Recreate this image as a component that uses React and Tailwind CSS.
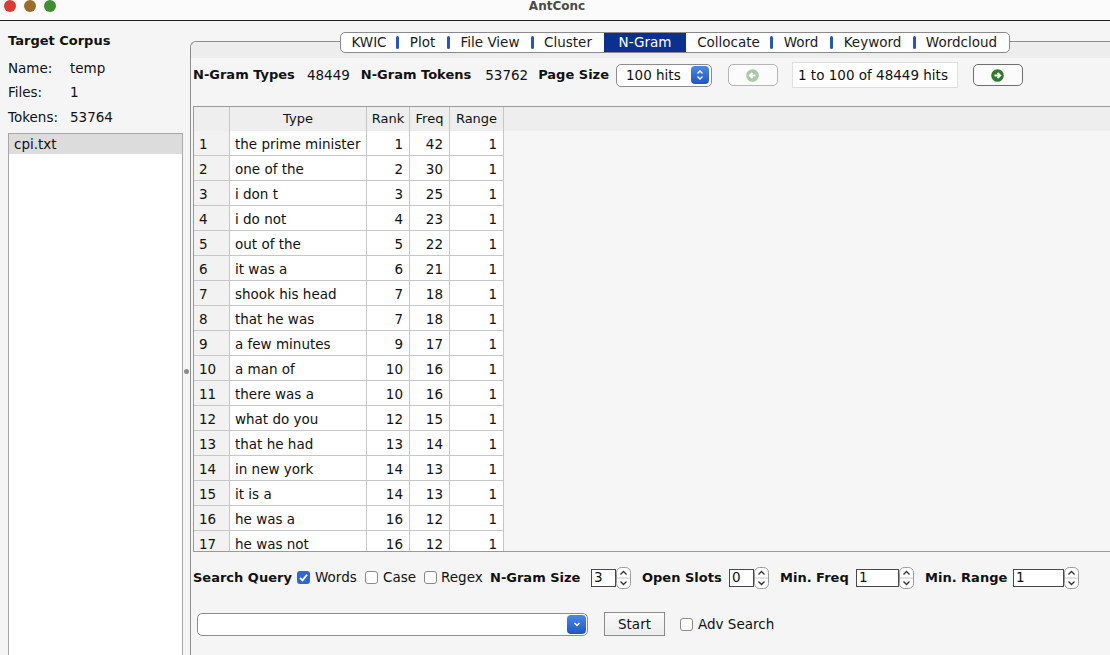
import React from "react";

const rows = [
  ["the prime minister", 1, 42, 1],
  ["one of the", 2, 30, 1],
  ["i don t", 3, 25, 1],
  ["i do not", 4, 23, 1],
  ["out of the", 5, 22, 1],
  ["it was a", 6, 21, 1],
  ["shook his head", 7, 18, 1],
  ["that he was", 7, 18, 1],
  ["a few minutes", 9, 17, 1],
  ["a man of", 10, 16, 1],
  ["there was a", 10, 16, 1],
  ["what do you", 12, 15, 1],
  ["that he had", 13, 14, 1],
  ["in new york", 14, 13, 1],
  ["it is a", 14, 13, 1],
  ["he was a", 16, 12, 1],
  ["he was not", 16, 12, 1],
];

const tabs = [
  ["KWIC", "w-[56px]"],
  ["Plot", "w-[51px]"],
  ["File View", "w-[84px]"],
  ["Cluster", "w-[72px]"],
  ["N-Gram", "w-[82px]"],
  ["Collocate", "w-[85px]"],
  ["Word", "w-[60px]"],
  ["Keyword", "w-[83px]"],
  ["Wordcloud", "w-[95px]"],
];

function Spinner() {
  return (
    <svg width="15" height="22" viewBox="0 0 15 22" className="shrink-0">
      <rect x="0.5" y="0.5" width="14" height="21" rx="5" fill="#fff" stroke="#9a9a9a" />
      <line x1="1" y1="11" x2="14" y2="11" stroke="#c8c8c8" />
      <path d="M4.5 7.5 L7.5 4.5 L10.5 7.5" fill="none" stroke="#333" strokeWidth="1.3" />
      <path d="M4.5 14.5 L7.5 17.5 L10.5 14.5" fill="none" stroke="#333" strokeWidth="1.3" />
    </svg>
  );
}

function Checkbox({ checked }) {
  if (checked) {
    return (
      <div className="w-[13px] h-[13px] rounded-[3px] bg-[#2c67d3] flex items-center justify-center shrink-0">
        <svg width="11" height="11" viewBox="0 0 11 11">
          <path d="M2 5.8 L4.5 8.3 L9 2.8" fill="none" stroke="#fff" strokeWidth="1.8" />
        </svg>
      </div>
    );
  }
  return <div className="w-[13px] h-[13px] rounded-[3px] border border-[#8a8a8a] bg-white shrink-0" />;
}

function NavIcon({ dir, color }) {
  return (
    <svg width="13" height="13" viewBox="0 0 13 13">
      <circle cx="6.5" cy="6.5" r="6.3" fill={color} />
      {dir === "left" ? (
        <path d="M9.5 6.5 H4 M6.5 3.8 L3.7 6.5 L6.5 9.2" fill="none" stroke="#fff" strokeWidth="1.8" />
      ) : (
        <path d="M3.5 6.5 H9 M6.5 3.8 L9.3 6.5 L6.5 9.2" fill="none" stroke="#fff" strokeWidth="1.8" />
      )}
    </svg>
  );
}

export default function App() {
  return (
    <div className="w-[1110px] h-[655px] overflow-hidden bg-[#f5f5f5] flex flex-col font-['DejaVu_Sans',sans-serif] text-[13.5px] text-[#111]">
      {/* title bar */}
      <div className="h-[21px] shrink-0 bg-[#fbfbfb] border-b border-[#1e1e1e] flex items-center">
        <div className="flex gap-[8px] pl-[4px] -mt-[8px]">
          <div className="w-[12px] h-[12px] rounded-full bg-[#dc3c31]" />
          <div className="w-[12px] h-[12px] rounded-full bg-[#9b6d2c]" />
          <div className="w-[12px] h-[12px] rounded-full bg-[#3f8e2f]" />
        </div>
        <div className="flex-1 text-center text-[12px] font-bold text-[#4a4a4a] -mt-[8px] pr-[52px]">AntConc</div>
      </div>

      <div className="flex flex-1 min-h-0">
        {/* left panel */}
        <div className="w-[183px] shrink-0 pl-[8px] pt-[8px] flex flex-col">
          <div className="h-[24px] flex items-center text-[13px] font-bold">Target Corpus</div>
          <div className="h-[24px] mt-[3px] flex items-center">
            <span className="w-[62px]">Name:</span>
            <span>temp</span>
          </div>
          <div className="h-[24px] flex items-center">
            <span className="w-[62px]">Files:</span>
            <span>1</span>
          </div>
          <div className="h-[26px] flex items-center pt-[1px]">
            <span className="w-[62px]">Tokens:</span>
            <span>53764</span>
          </div>
          <div className="mt-[3px] flex-1 bg-white border border-[#a8a8a8] border-b-0">
            <div className="h-[20px] bg-[#dcdcdc] flex items-center pl-[5px] pt-[1px]">cpi.txt</div>
          </div>
        </div>

        {/* divider */}
        <div className="w-[7px] shrink-0 flex justify-center pt-[348px]">
          <div className="w-[5px] h-[5px] rounded-full bg-[#8c8c8c]" />
        </div>

        {/* right panel */}
        <div className="flex-1 min-w-0 pt-[20px] flex flex-col">
          <div className="flex-1 min-h-0 flex flex-col border-t border-l border-[#8e8e8e] rounded-tl-[6px]">
            <div className="h-[16px] shrink-0 bg-[#ededed] rounded-tl-[6px] pl-[149px] flex items-start">
              <div className="-mt-[10px] h-[21px] flex border border-[#8a8a8a] rounded-[5px] bg-white overflow-hidden">
                {tabs.map(([label, w], i) => {
                  const selected = label === "N-Gram";
                  const prevSelected = i > 0 && tabs[i - 1][0] === "N-Gram";
                  return (
                    <div key={label} className={`${w} h-full relative flex items-center justify-center text-[13.5px] leading-none ${selected ? "bg-[#0c2f92] text-white" : "text-[#1a1a1a]"}`}>
                      {i > 0 && !selected && !prevSelected && (
                        <div className="absolute left-[-1px] top-[3px] w-[3px] h-[13px] rounded-full bg-[#2457c5]" />
                      )}
                      {label}
                    </div>
                  );
                })}
              </div>
            </div>

            <div className="h-[48px] shrink-0 flex items-center pb-[14px] pl-[2px]">
              <span className="text-[13px] font-bold">N-Gram Types</span>
              <span className="ml-[12px]">48449</span>
              <span className="ml-[11px] text-[13px] font-bold">N-Gram Tokens</span>
              <span className="ml-[14px]">53762</span>
              <span className="ml-[10px] text-[13px] font-bold">Page Size</span>
              <div className="ml-[7px] w-[96px] h-[23px] rounded-[5px] border border-[#8c8c8c] bg-white flex items-center pl-[9px] pr-[2px]">
                <span className="flex-1">100 hits</span>
                <div className="w-[18px] h-[18px] rounded-[4px] bg-gradient-to-b from-[#4b88e6] to-[#1e56c4] flex items-center justify-center">
                  <svg width="10" height="14" viewBox="0 0 10 14">
                    <path d="M2.5 5.5 L5 3 L7.5 5.5 M2.5 8.5 L5 11 L7.5 8.5" fill="none" stroke="#fff" strokeWidth="1.4" />
                  </svg>
                </div>
              </div>
              <div className="ml-[16px] w-[50px] h-[22px] rounded-[5px] border border-[#b5b5b5] bg-[#fbfbfb] flex items-center justify-center">
                <NavIcon dir="left" color="#a8c9a6" />
              </div>
              <div className="ml-[14px] w-[166px] h-[26px] bg-white border border-[#e0e0e0] flex items-center pl-[5px]">1 to 100 of 48449 hits</div>
              <div className="ml-[15px] w-[50px] h-[22px] rounded-[5px] border border-[#6e6e6e] bg-[#fbfbfb] flex items-center justify-center">
                <NavIcon dir="right" color="#2d7a2d" />
              </div>
            </div>

            {/* table */}
            <div className="ml-[2px] h-[446px] shrink-0 border-t border-l border-b border-[#9a9a9a] bg-[#f6f6f6] overflow-hidden">
              <div className="h-[24px] flex bg-[#eeeeee] text-[13px]">
                <div className="w-[36px] border-r border-[#c6c6c6]" />
                <div className="w-[137px] border-r border-[#c6c6c6] flex items-center justify-center">Type</div>
                <div className="w-[43px] border-r border-[#c6c6c6] flex items-center justify-center">Rank</div>
                <div className="w-[40px] border-r border-[#c6c6c6] flex items-center justify-center">Freq</div>
                <div className="w-[54px] border-r border-[#c6c6c6] flex items-center justify-center">Range</div>
              </div>
              {rows.map(([type, rank, freq, range], i) => (
                <div key={i} className="h-[25px] flex">
                  <div className="w-[36px] bg-[#f2f2f2] border-r border-b border-[#c6c6c6] flex items-center pl-[5px] pt-[3px]">{i + 1}</div>
                  <div className="w-[137px] bg-white border-r border-b border-[#c6c6c6] flex items-center pl-[5px] pt-[3px] whitespace-nowrap">{type}</div>
                  <div className="w-[43px] bg-white border-r border-b border-[#c6c6c6] flex items-center justify-end pr-[6px] pt-[3px]">{rank}</div>
                  <div className="w-[40px] bg-white border-r border-b border-[#c6c6c6] flex items-center justify-end pr-[6px] pt-[3px]">{freq}</div>
                  <div className="w-[54px] bg-white border-r border-b border-[#c6c6c6] flex items-center justify-end pr-[6px] pt-[3px]">{range}</div>
                </div>
              ))}
            </div>

            {/* search controls */}
            <div className="h-[50px] shrink-0 flex items-center pl-[2px] pt-[1px]">
              <span className="w-[104px] text-[13px] font-bold">Search Query</span>
              <Checkbox checked />
              <span className="ml-[5px] w-[50px]">Words</span>
              <Checkbox />
              <span className="ml-[5px] w-[41px]">Case</span>
              <Checkbox />
              <span className="ml-[4px] w-[49px]">Regex</span>
              <span className="w-[101px] text-[13px] font-bold">N-Gram Size</span>
              <div className="w-[25px] h-[18px] border border-[#4a4a4a] bg-white flex items-center pl-[2px]">3</div>
              <Spinner />
              <span className="ml-[11px] w-[87px] text-[13px] font-bold">Open Slots</span>
              <div className="w-[25px] h-[18px] border border-[#4a4a4a] bg-white flex items-center pl-[2px]">0</div>
              <Spinner />
              <span className="ml-[11px] w-[76px] text-[13px] font-bold">Min. Freq</span>
              <div className="w-[43px] h-[18px] border border-[#4a4a4a] bg-white flex items-center pl-[2px]">1</div>
              <Spinner />
              <span className="ml-[11px] w-[88px] text-[13px] font-bold">Min. Range</span>
              <div className="w-[51px] h-[18px] border border-[#4a4a4a] bg-white flex items-center pl-[2px]">1</div>
              <Spinner />
            </div>
            <div className="h-[44px] shrink-0 flex items-center pl-[6px]">
              <div className="w-[391px] h-[23px] rounded-[5px] border border-[#8e8e8e] bg-white flex items-center justify-end pr-[1px]">
                <div className="w-[19px] h-[19px] rounded-[4px] bg-gradient-to-b from-[#4b88e6] to-[#1e56c4] flex items-center justify-center">
                  <svg width="10" height="10" viewBox="0 0 10 10">
                    <path d="M2.5 4 L5 6.5 L7.5 4" fill="none" stroke="#fff" strokeWidth="1.5" />
                  </svg>
                </div>
              </div>
              <div className="ml-[16px] w-[61px] h-[24px] border border-[#8c8c8c] bg-gradient-to-b from-[#fafafa] to-[#ececec] flex items-center justify-center">Start</div>
              <div className="ml-[15px]"><Checkbox /></div>
              <span className="ml-[5px]">Adv Search</span>
            </div>
          </div>
        </div>
      </div>
    </div>
  );
}
